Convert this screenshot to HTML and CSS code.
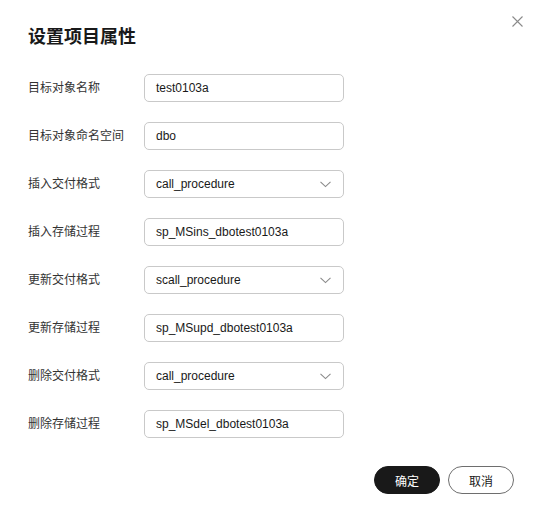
FILE: index.html
```html
<!DOCTYPE html>
<html lang="zh-CN">
<head>
    <meta charset="UTF-8">
    <title>设置项目属性</title>
    <link rel="stylesheet" href="styles.css">
</head>
<body>
    <div class="dialog">
        <button class="close-btn" aria-label="关闭">
            <svg width="11" height="11" viewBox="0 0 11 11"><path d="M0.5 0.5 L10.5 10.5 M10.5 0.5 L0.5 10.5" stroke="#8a8a8a" stroke-width="1.1" fill="none"/></svg>
        </button>
        <h2 class="dialog-title">设置项目属性</h2>

        <div class="form">
            <div class="form-row">
                <label>目标对象名称</label>
                <div class="field">test0103a</div>
            </div>
            <div class="form-row">
                <label>目标对象命名空间</label>
                <div class="field">dbo</div>
            </div>
            <div class="form-row">
                <label>插入交付格式</label>
                <div class="field select">call_procedure
                    <svg class="chevron" width="11" height="7" viewBox="0 0 11 7"><path d="M0.5 0.8 L5.5 5.6 L10.5 0.8" stroke="#8a8a8a" stroke-width="1.1" fill="none"/></svg>
                </div>
            </div>
            <div class="form-row">
                <label>插入存储过程</label>
                <div class="field">sp_MSins_dbotest0103a</div>
            </div>
            <div class="form-row">
                <label>更新交付格式</label>
                <div class="field select">scall_procedure
                    <svg class="chevron" width="11" height="7" viewBox="0 0 11 7"><path d="M0.5 0.8 L5.5 5.6 L10.5 0.8" stroke="#8a8a8a" stroke-width="1.1" fill="none"/></svg>
                </div>
            </div>
            <div class="form-row">
                <label>更新存储过程</label>
                <div class="field">sp_MSupd_dbotest0103a</div>
            </div>
            <div class="form-row">
                <label>删除交付格式</label>
                <div class="field select">call_procedure
                    <svg class="chevron" width="11" height="7" viewBox="0 0 11 7"><path d="M0.5 0.8 L5.5 5.6 L10.5 0.8" stroke="#8a8a8a" stroke-width="1.1" fill="none"/></svg>
                </div>
            </div>
            <div class="form-row">
                <label>删除存储过程</label>
                <div class="field">sp_MSdel_dbotest0103a</div>
            </div>
        </div>

        <div class="footer">
            <button class="btn btn-primary">确定</button>
            <button class="btn">取消</button>
        </div>
    </div>
</body>
</html>
```

FILE: styles.css
```css
body {
    margin: 0;
    background: #fff;
    font-family: "Liberation Sans", "Noto Sans CJK SC", sans-serif;
    color: #252b3a;
}
.dialog {
    position: relative;
    width: 544px;
    height: 522px;
    box-sizing: border-box;
    padding: 25px 30px 0 28px;
}
.close-btn {
    position: absolute;
    top: 16px;
    right: 21px;
    padding: 0;
    border: none;
    background: none;
    width: 11px;
    height: 11px;
    display: flex;
}
.dialog-title {
    margin: 0;
    font-size: 18px;
    line-height: 24px;
    font-weight: bold;
    color: #191919;
}
.form {
    margin-top: 25px;
    display: flex;
    flex-direction: column;
    gap: 20px;
}
.form-row {
    display: flex;
    align-items: center;
    height: 28px;
}
.form-row label {
    width: 116px;
    font-size: 12px;
    line-height: 16px;
    color: #333;
}
.field {
    box-sizing: border-box;
    width: 200px;
    height: 28px;
    border: 1px solid #c9c9c9;
    border-radius: 5px;
    padding: 0 11px;
    font-size: 12px;
    line-height: 26px;
    color: #191919;
    display: flex;
    align-items: center;
}
.select {
    justify-content: space-between;
}
.chevron {
    margin-right: 1px;
}
.footer {
    margin-top: 28px;
    display: flex;
    justify-content: flex-end;
    gap: 8px;
}
.btn {
    width: 66px;
    height: 28px;
    border-radius: 14px;
    border: 1px solid #6e6e6e;
    background: #fff;
    font-family: "Liberation Sans", "Noto Sans CJK SC", sans-serif;
    font-size: 12px;
    color: #191919;
    padding: 0;
    cursor: pointer;
}
.btn-primary {
    background: #191919;
    border-color: #191919;
    color: #fff;
}
```
